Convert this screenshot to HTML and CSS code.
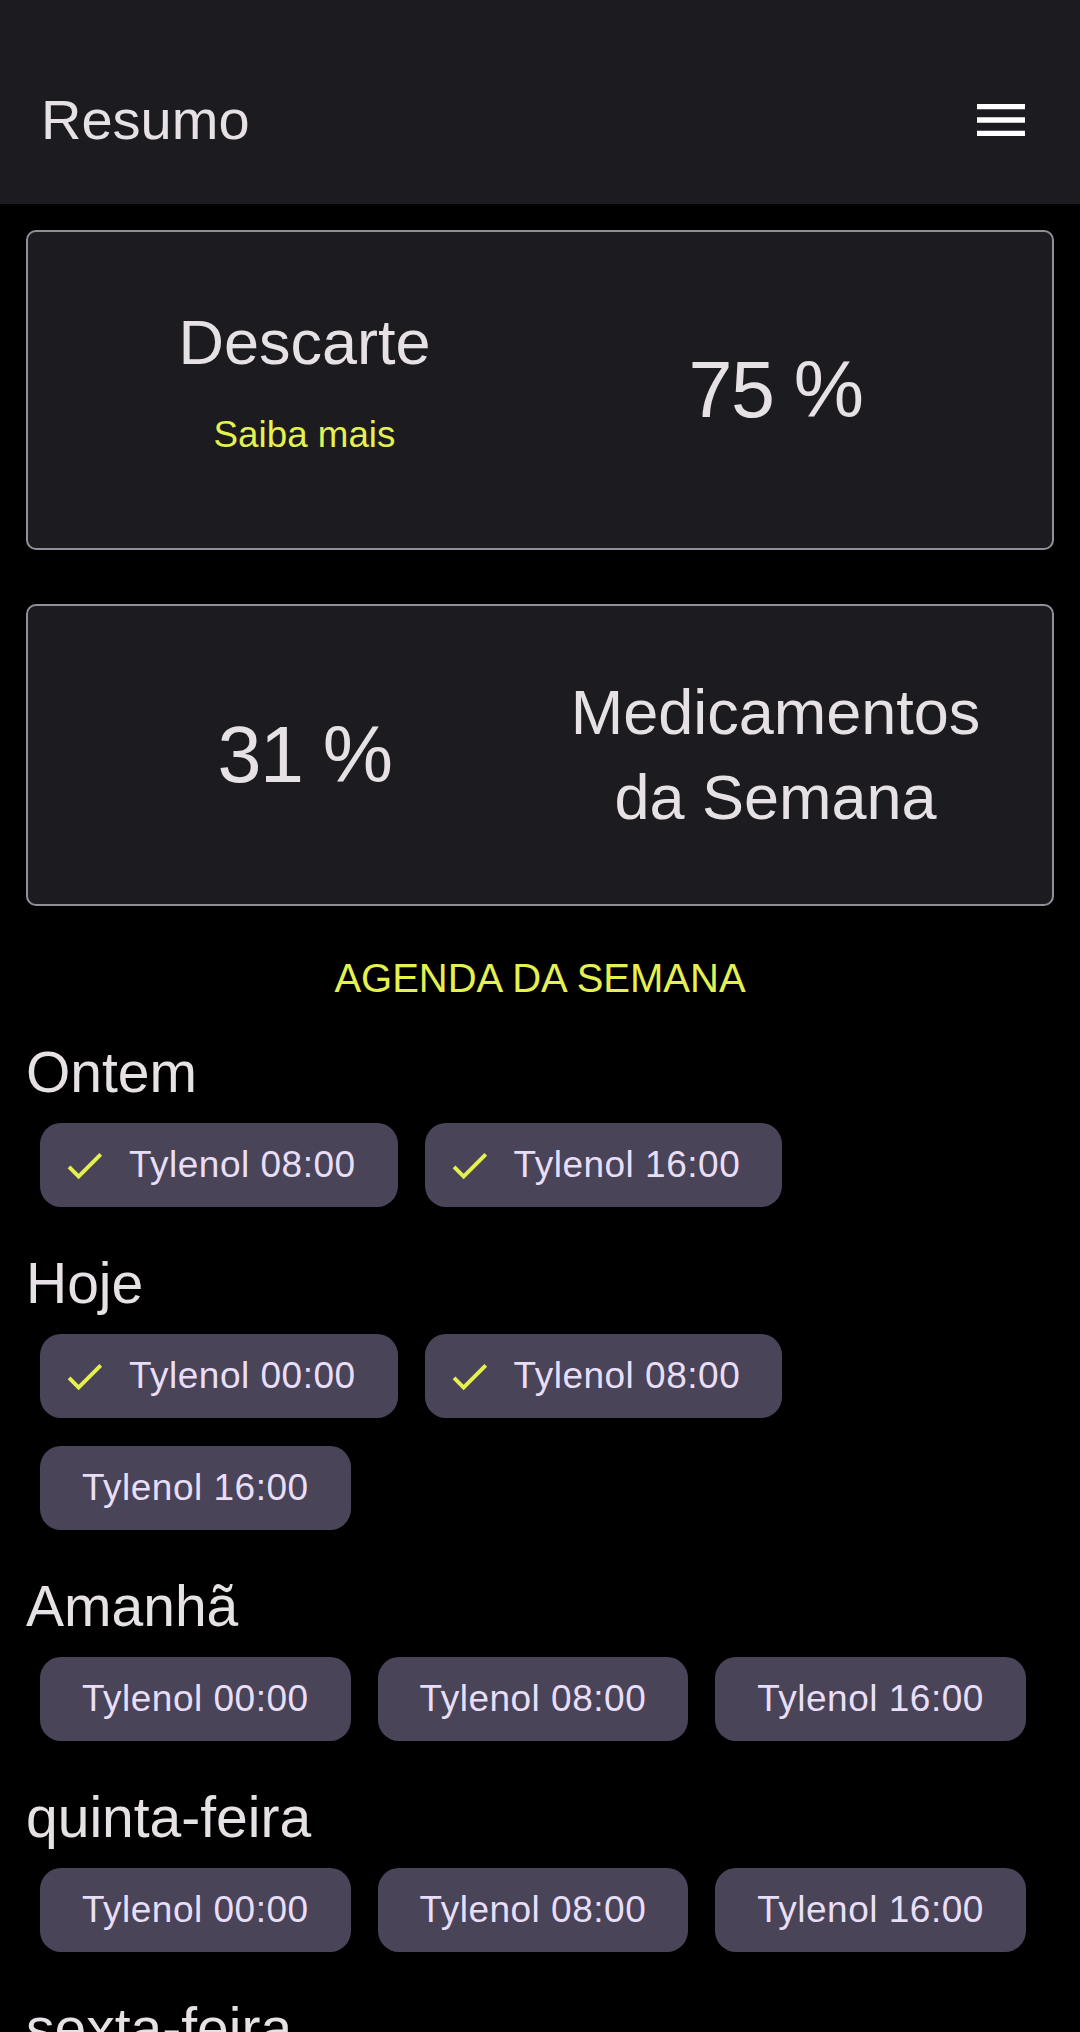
FILE: index.html
```html
<!DOCTYPE html>
<html lang="pt-BR">
<head>
<meta charset="utf-8">
<title>Resumo</title>
<link rel="stylesheet" href="styles.css">
</head>
<body>
<header class="topbar">
  <h1 class="topbar-title">Resumo</h1>
  <button class="menu-btn" aria-label="Menu">
    <svg viewBox="0 0 24 24" width="64" height="64"><path d="M3 18h18v-2H3v2zm0-5h18v-2H3v2zm0-7v2h18V6H3z" fill="#ffffff"/></svg>
  </button>
</header>
<main class="content">
  <section class="card card-discard">
    <div class="card-col card-col-left">
      <div class="card-title">Descarte</div>
      <a class="card-link">Saiba mais</a>
    </div>
    <div class="card-col">
      <div class="card-value">75 %</div>
    </div>
  </section>

  <section class="card card-week">
    <div class="card-col">
      <div class="card-value">31 %</div>
    </div>
    <div class="card-col">
      <div class="card-title card-title-multi">Medicamentos da Semana</div>
    </div>
  </section>

  <h2 class="agenda-title">AGENDA DA SEMANA</h2>

  <div class="day">
    <h3 class="day-title">Ontem</h3>
    <div class="chips">
      <span class="chip chip-done"><svg class="chip-icon" viewBox="0 0 24 24"><path d="M9 16.17L4.83 12l-1.42 1.41L9 19 21 7l-1.41-1.41z"/></svg>Tylenol 08:00</span>
      <span class="chip chip-done"><svg class="chip-icon" viewBox="0 0 24 24"><path d="M9 16.17L4.83 12l-1.42 1.41L9 19 21 7l-1.41-1.41z"/></svg>Tylenol 16:00</span>
    </div>
  </div>

  <div class="day">
    <h3 class="day-title">Hoje</h3>
    <div class="chips">
      <span class="chip chip-done"><svg class="chip-icon" viewBox="0 0 24 24"><path d="M9 16.17L4.83 12l-1.42 1.41L9 19 21 7l-1.41-1.41z"/></svg>Tylenol 00:00</span>
      <span class="chip chip-done"><svg class="chip-icon" viewBox="0 0 24 24"><path d="M9 16.17L4.83 12l-1.42 1.41L9 19 21 7l-1.41-1.41z"/></svg>Tylenol 08:00</span>
      <span class="chip">Tylenol 16:00</span>
    </div>
  </div>

  <div class="day">
    <h3 class="day-title">Amanhã</h3>
    <div class="chips">
      <span class="chip">Tylenol 00:00</span>
      <span class="chip">Tylenol 08:00</span>
      <span class="chip">Tylenol 16:00</span>
    </div>
  </div>

  <div class="day">
    <h3 class="day-title">quinta-feira</h3>
    <div class="chips">
      <span class="chip">Tylenol 00:00</span>
      <span class="chip">Tylenol 08:00</span>
      <span class="chip">Tylenol 16:00</span>
    </div>
  </div>

  <div class="day">
    <h3 class="day-title">sexta-feira</h3>
    <div class="chips">
      <span class="chip">Tylenol 00:00</span>
      <span class="chip">Tylenol 08:00</span>
      <span class="chip">Tylenol 16:00</span>
    </div>
  </div>
</main>
</body>
</html>
```

FILE: styles.css
```css
* {
  box-sizing: border-box;
}

html, body {
  margin: 0;
  padding: 0;
  background: #000000;
}

body {
  font-family: "Liberation Sans", Arial, Helvetica, sans-serif;
  color: #e6e1e5;
}

.topbar {
  height: 204px;
  padding: 36px 47px 0 41px;
  background: #1c1b1f;
  display: flex;
  align-items: center;
  justify-content: space-between;
}

.topbar-title {
  margin: 0;
  font-size: 56px;
  font-weight: 400;
  line-height: 64px;
  color: #e6e1e5;
}

.menu-btn {
  display: flex;
  padding: 0;
  border: 0;
  background: transparent;
}

.content {
  padding: 26px 26px 40px;
}

.card {
  display: flex;
  align-items: center;
  background: #1c1b1f;
  border: 2px solid #938f99;
  border-radius: 10px;
  padding: 0 41px;
}

.card-discard {
  min-height: 320px;
}

.card-week {
  margin-top: 54px;
  padding-top: 64px;
  padding-bottom: 64px;
}

.card-col {
  flex: 1 1 0;
  display: flex;
  flex-direction: column;
  align-items: center;
  text-align: center;
}

.card-col-left {
  padding-bottom: 19px;
}

.card-title {
  font-size: 63px;
  line-height: 72px;
  color: #e6e1e5;
}

.card-title-multi {
  line-height: 85px;
}

.card-link {
  margin-top: 36px;
  font-size: 36.75px;
  line-height: 42px;
  color: #e4f14e;
}

.card-value {
  font-size: 79px;
  line-height: 90px;
  letter-spacing: -1.5px;
  color: #e6e1e5;
}

.agenda-title {
  margin: 49px 0 0;
  font-size: 40px;
  font-weight: 400;
  line-height: 46px;
  text-align: center;
  color: #e4f14e;
}

.day {
  margin-top: 44px;
}

.agenda-title + .day {
  margin-top: 39px;
}

.day-title {
  margin: 0;
  font-size: 57px;
  font-weight: 400;
  line-height: 64px;
  color: #e6e1e5;
}

.chips {
  margin-top: 19px;
  padding-left: 14px;
  display: flex;
  flex-wrap: wrap;
  column-gap: 27px;
  row-gap: 28px;
}

.chip {
  display: inline-flex;
  align-items: center;
  height: 84px;
  padding: 0 42px;
  border-radius: 21px;
  background: #4a4458;
  color: #e8def8;
  font-size: 37px;
  letter-spacing: 0.5px;
  white-space: nowrap;
}

.chip-done {
  padding-left: 21px;
}

.chip-icon {
  width: 47px;
  height: 47px;
  margin-right: 21px;
  fill: #e4f14e;
  flex: none;
}
```
